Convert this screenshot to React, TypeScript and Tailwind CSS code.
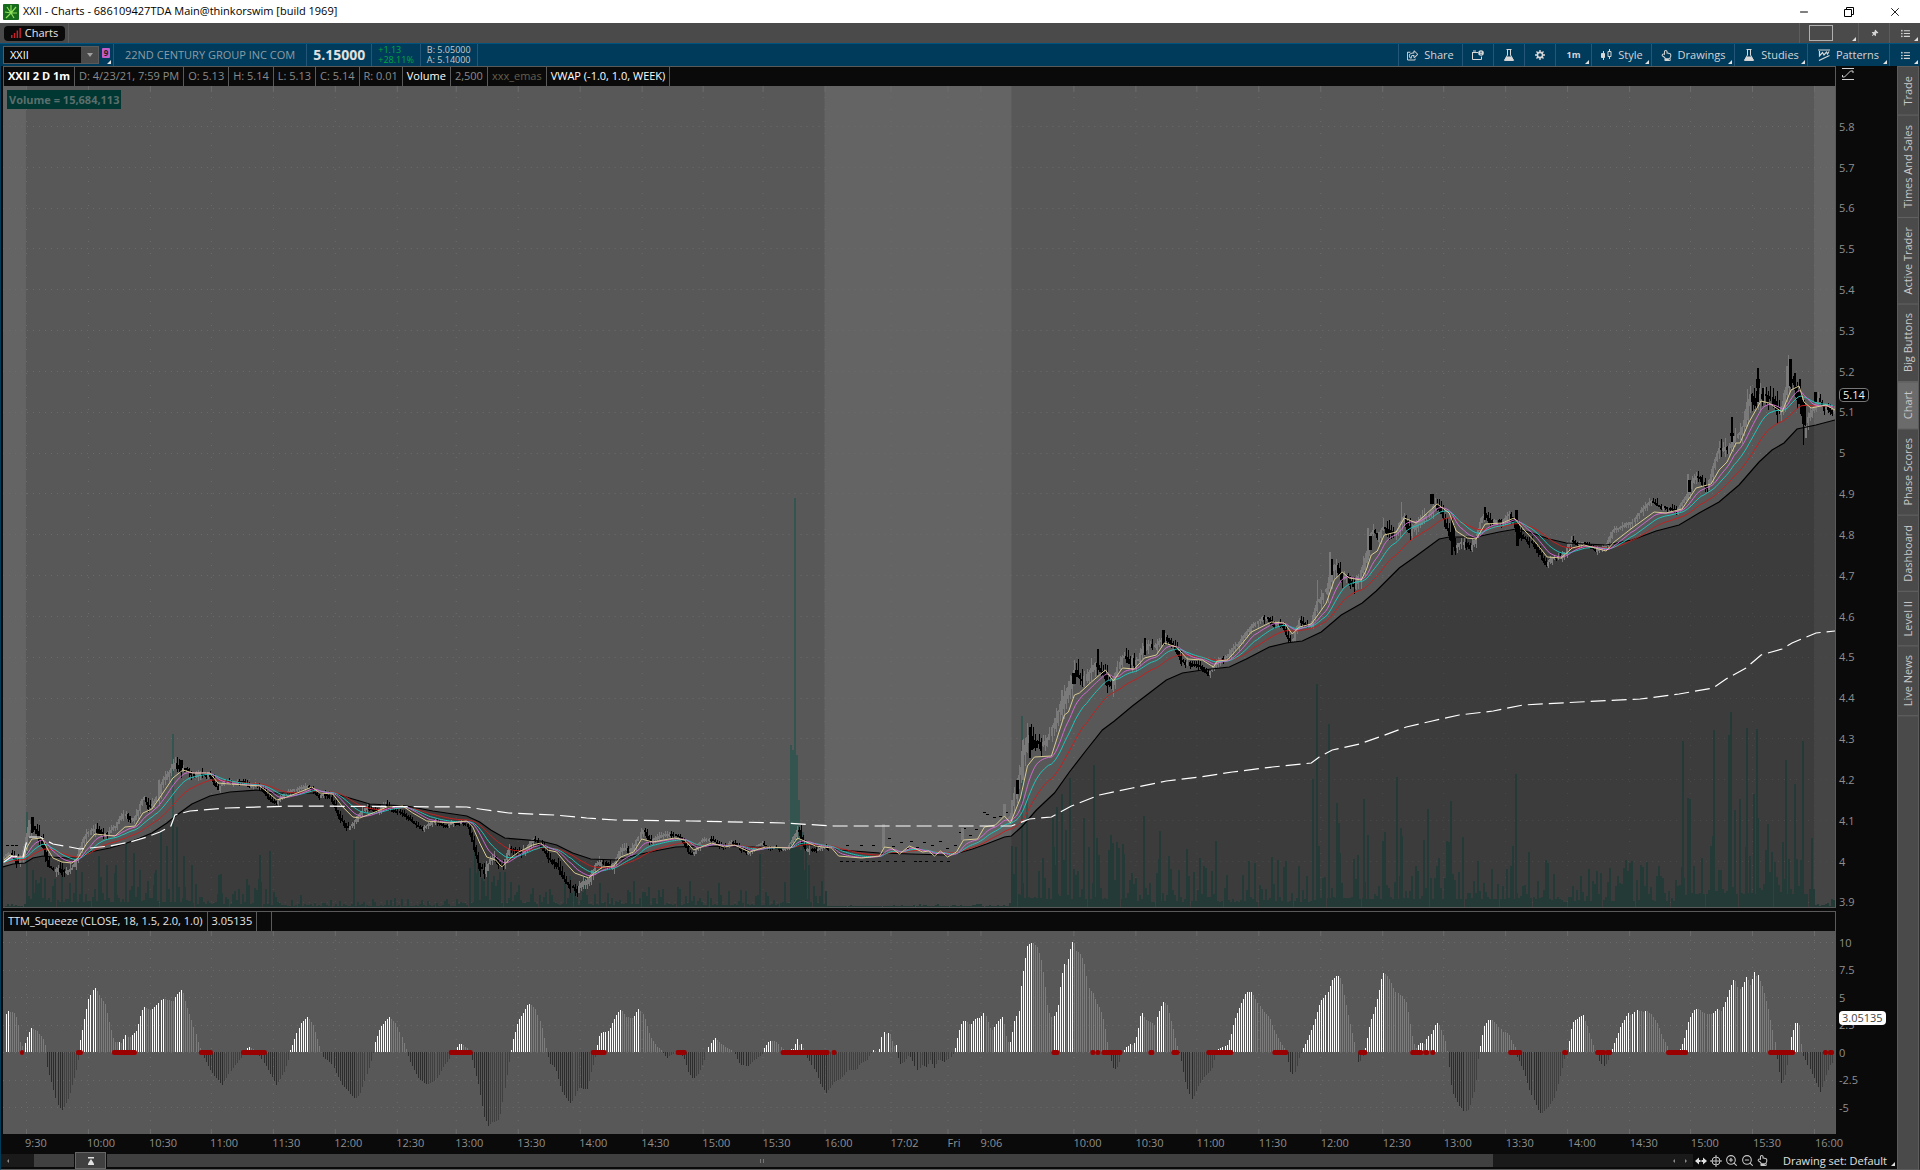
import type { ReactNode } from "react";
import { FaListUl, FaRegHandPointUp, FaRegShareSquare, FaThumbtack } from "react-icons/fa";
import { Minus, X, ZoomIn, ZoomOut } from "lucide-react";

type Pt = [number, number];

const STEP = 2.06;
const LEFT = 3;
const RIGHT = 1836;

const FAST: Pt[] = [
  [4,860],[10,855],[15,857],[24,857],[27,847],[32,839],[42,838],[47,848],[53,858],[62,862],[72,863],[78,858],[87,843],[95,834],
  [115,836],[125,827],[135,826],[143,813],[152,809],[163,793],[173,778],[183,770],[193,773],[210,773],[218,783],[230,784],
  [260,786],[270,794],[277,800],[287,797],[300,792],[312,787],[320,793],[333,794],[343,807],[353,817],[360,818],[373,813],
  [387,807],[403,806],[413,813],[427,821],[450,823],[467,821],[473,827],[480,843],[487,857],[496,860],[502,867],[512,857],
  [519,852],[533,845],[541,843],[548,850],[557,852],[566,863],[575,873],[589,878],[596,872],[603,867],[614,866],[621,857],
  [634,852],[642,839],[653,842],[675,838],[685,840],[694,850],[712,843],[725,847],[735,845],[750,852],[766,847],[791,848],
  [798,838],[807,842],[816,846],[832,848],[839,856],[862,858],[880,856],[885,847],[892,848],[900,854],[910,846],[923,852],
  [929,851],[935,856],[941,851],[948,857],[957,852],[964,840],[978,839],[985,827],[996,825],[1005,816],[1011,823],
  [1021,798],[1028,766],[1035,757],[1052,756],[1058,737],[1065,715],[1069,712],[1075,695],[1080,693],[1092,682],[1106,670],
  [1114,681],[1123,668],[1135,669],[1145,658],[1157,655],[1165,643],[1177,647],[1188,659],[1203,660],[1214,667],[1218,661],
  [1228,660],[1240,647],[1252,632],[1272,622],[1285,623],[1293,634],[1300,627],[1312,624],[1320,613],[1327,603],[1335,580],
  [1343,572],[1350,578],[1362,580],[1367,570],[1372,555],[1378,551],[1385,535],[1397,532],[1405,518],[1417,523],[1438,504],
  [1450,513],[1457,531],[1468,538],[1477,539],[1486,524],[1503,523],[1515,518],[1525,530],[1537,543],[1548,557],[1562,558],
  [1573,548],[1585,545],[1607,551],[1615,542],[1633,528],[1655,512],[1667,513],[1683,509],[1697,488],[1712,484],[1720,470],
  [1728,462],[1737,443],[1741,443],[1750,422],[1762,401],[1770,403],[1783,412],[1792,390],[1800,386],[1805,402],[1812,408],
  [1827,405],[1836,410],
];

const SLOW: Pt[] = [
  [3,867],[13,864],[25,863],[33,858],[43,856],[53,857],[67,858],[80,858],[90,852],[110,848],[127,843],[140,838],[152,833],
  [167,823],[177,815],[192,804],[210,796],[230,792],[257,790],[273,793],[300,793],[333,793],[353,799],[370,804],[407,806],
  [433,811],[467,816],[480,822],[491,830],[505,838],[541,841],[557,845],[573,853],[591,859],[617,860],[637,855],[655,851],
  [676,847],[701,846],[751,847],[791,848],[801,844],[823,846],[841,850],[880,853],[944,855],[959,853],[973,849],[987,844],
  [1005,837],[1012,836],[1023,826],[1037,810],[1055,793],[1070,772],[1087,750],[1103,730],[1115,721],[1133,706],[1150,693],
  [1167,680],[1183,673],[1203,670],[1230,667],[1247,659],[1270,647],[1287,643],[1303,641],[1322,632],[1342,615],[1363,603],
  [1377,591],[1400,568],[1417,556],[1440,539],[1450,537],[1477,537],[1500,532],[1517,529],[1533,533],[1550,539],[1567,543],
  [1607,545],[1633,540],[1657,531],[1680,525],[1700,513],[1720,502],[1740,485],[1760,462],[1773,450],[1785,443],[1798,429],
  [1817,425],[1836,420],
];

const VWAP: Pt[] = [
  [4,862],[12,856],[23,857],[27,840],[30,837],[40,837],[53,844],[70,847],[80,849],[110,846],[130,842],[147,837],[160,832],
  [171,826],[175,815],[190,811],[227,808],[293,806],[467,807],[480,809],[509,813],[555,815],[587,818],[616,820],[691,821],
  [784,823],[834,826],[1012,826],[1030,819],[1052,817],[1072,806],[1100,795],[1133,788],[1167,781],[1200,777],[1233,772],
  [1273,767],[1312,763],[1320,757],[1333,750],[1360,744],[1383,736],[1407,727],[1433,721],[1460,715],[1494,711],[1524,705],
  [1580,702],[1641,699],[1680,694],[1714,688],[1727,679],[1747,668],[1762,655],[1783,649],[1793,643],[1817,633],[1836,631],
];

// candle size along the session
const RANGE: Pt[] = [
  [4,1],[26,12],[60,9],[85,9],[115,7],[175,10],[220,5],[300,4],[340,6],[470,4],[480,12],[510,7],[570,9],[640,8],[660,5],
  [790,3],[800,10],[820,3],[1010,2],[1020,24],[1050,14],[1065,18],[1110,13],[1200,7],[1310,6],[1325,14],[1400,13],[1450,10],
  [1520,8],[1600,5],[1700,8],[1730,15],[1800,17],[1815,9],[1836,7],
];

// x, top, bottom, width of the widest swings
const SWINGS_DOWN: [number, number, number, number][] = [
  [31,817,833,2],[180,760,768,3],[1030,727,758,2],[1031,736,750,3],[1017,780,794,3],[1073,673,684,4],[1098,649,668,2],[1145,638,655,2],
  [1163,630,645,3],[1332,559,575,2],[1370,536,550,3],[1431,494,504,4],[1452,518,555,2],[1453,525,545,3],[1485,507,520,2],
  [1516,510,520,3],[1517,520,546,3],[1689,480,492,3],[1732,417,442,2],[1731,433,436,4],[1758,368,402,2],[1757,379,388,4],[1763,388,402,2],
  [1790,359,386,3],[1795,373,388,2],[1800,379,400,2],[1803,400,424,3],[1804,420,445,1],[1815,392,402,3],
];
const SWINGS_UP: [number, number, number, number][] = [
  [28,820,836,2],[158,780,792,2],[1012,800,822,2],[1023,740,780,2],[1028,723,745,1],[1062,690,715,2],[1318,580,612,1],[1330,552,588,2],
  [1368,528,560,2],[1402,502,518,1],[1688,474,500,2],[1748,389,420,1],[1787,366,395,2],[1789,355,380,1],[1806,425,438,2],
];

const VOLUME_RANGE: Pt[] = [
  [3,3],[26,3],[27,40],[190,36],[200,22],[260,26],[276,14],[320,8],[465,8],[472,40],[560,20],[640,20],[780,14],[800,60],
  [825,22],[827,2],[1010,3],[1013,70],[1130,70],[1140,45],[1310,45],[1320,75],[1400,65],[1520,65],[1560,45],[1680,50],
  [1690,110],[1812,110],[1816,10],[1836,8],
];

const VOLUME_SPIKES: Pt[] = [
  [27,812],[33,870],[36,880],[41,877],[70,883],[76,870],[99,856],[116,865],[126,843],[134,853],[140,870],[155,873],[161,832],
  [167,846],[173,734],[177,827],[184,856],[192,865],[219,875],[221,874],[260,855],[270,851],[354,840],[470,868],[475,850],
  [478,860],[488,865],[498,880],[565,883],[570,876],[585,875],[600,883],[634,881],[659,890],[678,887],[690,881],[719,883],
  [741,890],[760,854],[791,745],[793,750],[795,498],[797,755],[799,800],[801,850],[803,832],[806,840],[809,865],[822,882],
  [1013,857],[1017,847],[1023,716],[1028,797],[1044,858],[1054,818],[1058,807],[1063,794],[1067,830],[1071,778],[1085,818],
  [1095,765],[1098,838],[1110,850],[1120,848],[1124,844],[1145,816],[1161,831],[1170,856],[1188,849],[1217,841],[1273,857],
  [1314,779],[1318,684],[1320,846],[1330,724],[1338,803],[1340,823],[1365,799],[1369,835],[1398,777],[1402,828],[1429,809],
  [1452,801],[1450,842],[1517,774],[1684,741],[1715,730],[1730,735],[1732,712],[1748,728],[1758,729],[1787,760],[1804,741],
];

const SQUEEZE: Pt[] = [
  [6,38],[8,41],[15,39],[18,30],[21,5],[24,8],[30,24],[37,21],[44,12],[46,3],[47,-14],[57,-52],[62,-59],[69,-44],[71,-37],
  [77,-14],[79,-4],[80,11],[88,52],[94,65],[100,55],[105,48],[109,30],[113,14],[116,9],[118,10],[122,9],[125,17],[129,14],
  [136,21],[141,40],[143,45],[151,42],[157,48],[162,53],[173,51],[176,57],[182,63],[186,48],[192,30],[198,9],[201,0],[203,-5],
  [211,-20],[222,-33],[233,-15],[241,-6],[244,0],[248,5],[253,3],[256,0],[261,-6],[276,-33],[284,-20],[289,-6],[290,1],
  [294,12],[300,28],[307,35],[313,27],[320,3],[323,-5],[331,-11],[341,-32],[355,-47],[360,-42],[367,-21],[372,-5],[374,8],
  [380,25],[389,35],[396,28],[402,14],[406,2],[409,-8],[418,-26],[427,-33],[435,-29],[443,-15],[450,-5],[453,0],[456,3],
  [460,9],[469,3],[471,-6],[478,-33],[484,-65],[488,-74],[492,-70],[498,-69],[501,-60],[506,-26],[510,-2],[512,10],[518,32],
  [522,37],[528,49],[535,44],[541,27],[546,3],[549,-11],[555,-16],[562,-40],[571,-52],[578,-36],[587,-37],[591,-20],[595,-6],
  [596,2],[600,19],[608,21],[616,38],[621,43],[626,35],[633,34],[639,44],[644,35],[650,15],[656,6],[661,2],[667,-6],[673,-2],
  [676,1],[683,-5],[688,-20],[693,-27],[699,-21],[705,-6],[707,2],[714,15],[720,9],[726,4],[731,2],[735,-2],[740,-12],
  [747,-15],[754,-8],[762,-2],[763,2],[767,9],[771,12],[778,9],[781,4],[785,2],[793,3],[797,13],[799,7],[802,8],[804,2],
  [808,-7],[816,-21],[820,-33],[826,-41],[834,-30],[841,-27],[848,-18],[856,-18],[860,-11],[867,-8],[871,-1],[873,2],[877,0],
  [879,2],[881,8],[882,23],[885,17],[887,19],[890,18],[893,6],[896,7],[897,-3],[900,-12],[905,-9],[909,-3],[913,-10],
  [918,-22],[922,-13],[927,-15],[931,-8],[935,-16],[940,-7],[945,-10],[952,-5],[955,1],[959,20],[963,31],[967,31],[971,27],
  [977,34],[981,34],[985,40],[990,26],[992,21],[995,25],[1000,33],[1004,35],[1007,17],[1010,7],[1012,12],[1015,30],[1020,42],
  [1022,73],[1025,88],[1027,106],[1029,107],[1033,110],[1038,105],[1043,90],[1046,67],[1049,42],[1053,34],[1058,42],[1061,67],
  [1064,88],[1068,87],[1070,100],[1074,113],[1078,98],[1080,101],[1085,90],[1090,62],[1094,59],[1097,49],[1101,43],[1105,29],
  [1109,5],[1111,-5],[1115,-19],[1120,-13],[1122,-1],[1127,5],[1131,8],[1134,7],[1138,18],[1142,41],[1146,33],[1156,27],
  [1158,37],[1164,51],[1168,47],[1173,27],[1178,6],[1181,-3],[1187,-33],[1193,-48],[1199,-33],[1205,-25],[1213,-17],[1217,-1],
  [1220,4],[1227,6],[1231,15],[1235,32],[1240,44],[1247,60],[1253,60],[1258,50],[1264,41],[1270,35],[1275,22],[1280,12],
  [1286,3],[1288,-3],[1292,-23],[1296,-20],[1300,-5],[1304,4],[1308,12],[1315,29],[1321,50],[1328,59],[1333,73],[1338,77],
  [1342,73],[1347,47],[1353,20],[1357,2],[1360,-13],[1364,-3],[1367,11],[1371,31],[1375,41],[1380,62],[1383,78],[1385,80],
  [1391,72],[1396,60],[1403,56],[1407,50],[1410,34],[1414,10],[1417,4],[1422,10],[1426,8],[1428,15],[1432,18],[1436,28],
  [1439,29],[1444,17],[1447,8],[1449,-6],[1453,-40],[1460,-53],[1465,-60],[1469,-58],[1476,-36],[1479,-6],[1482,12],[1485,26],
  [1489,32],[1493,32],[1498,27],[1504,20],[1509,19],[1513,9],[1516,5],[1518,-5],[1525,-20],[1531,-40],[1540,-61],[1543,-61],
  [1549,-55],[1555,-46],[1560,-30],[1564,-13],[1567,0],[1569,7],[1571,21],[1574,31],[1584,37],[1589,23],[1593,10],[1597,0],
  [1601,-10],[1605,-15],[1610,-5],[1613,4],[1617,14],[1621,25],[1629,39],[1632,37],[1638,42],[1643,40],[1647,41],[1652,38],
  [1658,29],[1664,14],[1668,7],[1671,-1],[1679,-1],[1682,5],[1685,14],[1689,30],[1694,41],[1698,44],[1704,40],[1711,37],
  [1718,43],[1722,41],[1727,52],[1731,64],[1735,74],[1739,64],[1742,63],[1747,76],[1751,67],[1755,80],[1757,76],[1759,77],
  [1764,64],[1769,45],[1775,14],[1778,-10],[1782,-33],[1787,-20],[1789,-5],[1792,15],[1796,29],[1800,29],[1802,10],[1804,-3],
  [1811,-18],[1821,-40],[1827,-23],[1832,-11],
];

const DOTS: Pt[] = [
  [20,24],[76,83],[112,137],[199,213],[241,267],[449,473],[591,607],[676,687],[781,830],[832,837],[1052,1060],[1091,1096],
  [1096,1101],[1102,1123],[1149,1155],[1172,1180],[1207,1234],[1273,1289],[1359,1368],[1411,1424],[1424,1430],[1431,1436],
  [1509,1523],[1563,1569],[1596,1607],[1606,1613],[1667,1689],[1769,1796],[1824,1829],[1829,1835],
];

const TIMES: [string, number][] = [
  ["9:30",26],["10:00",88],["10:30",150],["11:00",211],["11:30",273],["12:00",335],["12:30",397],["13:00",456],["13:30",518],
  ["14:00",580],["14:30",642],["15:00",703],["15:30",763],["16:00",825],["17:02",891],["Fri",948],["9:06",981],["10:00",1074],
  ["10:30",1136],["11:00",1197],["11:30",1259],["12:00",1321],["12:30",1383],["13:00",1444],["13:30",1506],["14:00",1568],
  ["14:30",1630],["15:00",1691],["15:30",1753],["16:00",1815],
];

const PRICES = ["5.8","5.7","5.6","5.5","5.4","5.3","5.2","5.1","5","4.9","4.8","4.7","4.6","4.5","4.4","4.3","4.2","4.1","4","3.9"];
const LEVELS = ["10", "7.5", "5", "2.5", "0", "-2.5", "-5"];

// thin prints outside regular hours
const PRINTS: Pt[] = [
  [6,845],[11,845],[15,845],[840,861],[846,861],[852,861],[860,861],[866,861],[872,861],[878,861],[886,861],[894,861],[902,861],
  [914,861],[920,861],[926,861],[934,861],[941,861],[948,861],[846,845],[860,845],[872,845],[888,838],[892,846],[900,842],
  [906,848],[910,841],[916,847],[924,842],[932,845],[940,841],[947,848],[955,845],[960,832],[964,828],[970,835],[976,829],
  [984,812],[987,814],[994,817],[1000,816],[1004,815],[1006,812],
];

function at(points: Pt[], x: number) {
  if (x <= points[0][0]) return points[0][1];
  for (let i = 1; i < points.length; i++) {
    const [x1, y1] = points[i];
    if (x <= x1) {
      const [x0, y0] = points[i - 1];
      return y0 + ((y1 - y0) * (x - x0)) / (x1 - x0);
    }
  }
  return points[points.length - 1][1];
}

function random(seed: number) {
  let s = seed;
  return () => {
    s = (s * 1664525 + 1013904223) % 4294967296;
    return s / 4294967296;
  };
}

const line = (points: Pt[]) => "M" + points.map(([x, y]) => `${x} ${y.toFixed(1)}`).join("L");

function ema(length: number): Pt[] {
  const out: Pt[] = [];
  const k = 2 / (length + 1);
  let v = 863;
  for (let x = 3; x <= RIGHT; x += STEP) {
    v += (at(FAST, x) - v) * k;
    out.push([Math.round(x), v]);
  }
  return out;
}

function candles() {
  const rnd = random(22);
  let up = "";
  let down = "";
  let prev = at(FAST, 4);
  let drift = 0;
  let push = 0;
  let i = 0;
  for (let x = 4; x < RIGHT; x += STEP) {
    const size = at(RANGE, x);
    if (x > 830 && x < 1008) {
      prev = at(FAST, x);
      continue;
    }
    // moves last three bars, so that rising and falling bars come in runs
    if (i++ % 3 === 0) push = rnd() - 0.5;
    drift = drift * 0.8 + push * size * 0.6;
    const fast = at(FAST, x);
    const lead = (at(FAST, x + 5) - at(FAST, x - 7)) * 0.75;
    const close = fast + lead + drift;
    const top = Math.round(Math.min(prev, close));
    const h = Math.max(2, Math.round(Math.abs(close - prev) + rnd() * size * 0.5));
    const wickTop = Math.round(top - rnd() * size * 0.7);
    const wickEnd = Math.round(top + h + rnd() * size * 0.6);
    const px = Math.round(x);
    const d = `M${px - 1} ${top}h2v${h}h-2zM${px} ${wickTop}h1V${wickEnd}h-1z`;
    if (close < prev) up += d;
    else down += d;
    prev = close;
  }
  for (const [x, y0, y1, w] of SWINGS_UP) up += `M${x} ${y0}h${w}V${y1}h${-w}z`;
  for (const [x, y0, y1, w] of SWINGS_DOWN) down += `M${x} ${y0}h${w}V${y1}h${-w}z`;
  return { up, down };
}

function volume() {
  const rnd = random(7);
  let d = "";
  for (let x = 5; x < RIGHT; x += STEP) {
    const r = rnd();
    const h = Math.max(1, Math.round(at(VOLUME_RANGE, x) * (0.12 + r * r * r)));
    d += `M${Math.round(x)} 907v${-h}h2v${h}z`;
  }
  for (const [x, y] of VOLUME_SPIKES) d += `M${x - 1} 907V${y}h2V907z`;
  return d;
}

function squeeze() {
  const out = { rise: "", fade: "", drop: "", recover: "" };
  let prev = 0;
  for (let x = 6; x < 1834; x += STEP) {
    const v = at(SQUEEZE, x);
    const bar = `M${Math.round(x)} 1052v${-Math.round(v)}h1V1052z`;
    if (v >= 0) out[v >= prev ? "rise" : "fade"] += bar;
    else out[v < prev ? "drop" : "recover"] += bar;
    prev = v;
  }
  return out;
}

const CANDLES = candles();
const VOLUME = volume();
const BARS = squeeze();

function Corner() {
  return (
    <svg className="absolute right-0.5 bottom-0.5 size-1" viewBox="0 0 4 4" fill="#e0e0e0"><path d="M4 0v4H0z" /></svg>
  );
}

function Flask() {
  return (
    <svg className="size-3" viewBox="0 0 12 12" fill="none" stroke="#d8d8d8">
      <path d="M3.5 .5h5M4.5 1v5L1.5 11.3h9L7.5 6V1" />
      <path d="M3.6 8h4.8l1.8 3.3H1.8z" fill="#d8d8d8" />
    </svg>
  );
}

function Gear() {
  return (
    <svg className="size-2.5" viewBox="0 0 10 10" fill="none" stroke="#d8d8d8">
      <circle cx="5" cy="5" r="2.6" strokeWidth="1.6" />
      <path d="M5 0v2M5 8v2M0 5h2M8 5h2M1.500 1.500l1.400 1.400M7.100 7.100l1.400 1.400M8.500 1.500 7.100 2.900M2.900 7.100 1.500 8.500" strokeWidth="1.400" />
    </svg>
  );
}

function StyleIcon() {
  return (
    <svg className="size-3" viewBox="0 0 12 12" fill="none" stroke="#d8d8d8">
      <path d="M3.5 2v9M9.5 0v10" />
      <path d="M1.5 4.5h3v4h-3z" fill="#d8d8d8" />
      <path d="M8 2.5h3v5H8z" fill="#003b5c" />
    </svg>
  );
}

function PatternIcon() {
  return (
    <svg className="size-3" viewBox="0 0 12 12" fill="none" stroke="#d8d8d8">
      <path d="M0 1h12M1.500 2v5l3-3.500 1.500 2.500 2.500-3 1 2L11 2.500M1 11.500 11.500 6.500" strokeWidth="1.200" />
    </svg>
  );
}

function AlertIcon() {
  return (
    <svg className="size-3" viewBox="0 0 12 12" fill="none" stroke="#d8d8d8">
      <path d="M.5 3v7.500h9V7.500M.5 3.500H6M1 2h3" />
      <circle cx="9" cy="4" r="2.800" fill="#d8d8d8" stroke="none" />
      <path d="M9 2.500v1.800M9 5v.8" stroke="#003b5c" />
    </svg>
  );
}

function Tool({ label, icon, width, menu, text }: { label: string; icon?: ReactNode; width: string; menu?: boolean; text?: boolean }) {
  return (
    <button aria-label={label} className={`relative flex h-full items-center justify-center gap-1.5 border-l border-[#24567a] text-[#d4d4d4] ${width}`}>
      {icon}
      {text && <span>{label}</span>}
      {menu && <Corner />}
    </button>
  );
}

function TitleBar() {
  return (
    <header className="flex h-[23px] shrink-0 items-center bg-white pl-[3px] text-black">
      <svg className="size-4" viewBox="0 0 16 16">
        <rect width="16" height="16" rx="1" fill="#176b1c" />
        <path d="M8 9 4 3M8 9l5-6M8 9V1M8 9l6 0M8 9 2 8M8 9l-5 5M8 9l3 5" stroke="#8fe05a" strokeWidth="1.200" />
      </svg>
      <h1 className="ml-1 text-[11px]">XXII - Charts - 686109427TDA Main@thinkorswim [build 1969]</h1>
      <div className="ml-auto flex items-center gap-[34px] pr-[18px]">
        <button aria-label="Minimize"><Minus size={12} strokeWidth={2} /></button>
        <button aria-label="Restore">
          <svg className="size-2.5" viewBox="0 0 10 10" fill="none" stroke="#000"><path d="M.5 2.500h7v7h-7zM2.500 2.500v-2h7v7h-2" /></svg>
        </button>
        <button aria-label="Close"><X size={14} strokeWidth={1.500} /></button>
      </div>
    </header>
  );
}

function TabBar() {
  return (
    <nav className="flex h-5 shrink-0 items-stretch bg-[#4a4a4a]">
      <div className="flex items-center border-r border-[#5c5c5c] pr-[3px] pl-1">
        <button className="flex h-[15px] w-[61px] items-center justify-center gap-1 rounded bg-[#0a0a0a] text-[11px] text-[#e6e6e6]">
          <svg className="size-2.5" viewBox="0 0 10 10" fill="#c4232a"><path d="M0 7h1.500v3H0zM2.800 5h1.500v5H2.800zM5.600 2.500h1.500V10H5.600zM8.400 0h1.500v10H8.400z" /></svg>
          Charts
        </button>
      </div>
      <button aria-label="Workspace" className="relative ml-auto w-[59px] border-l border-[#5c5c5c] pl-[9px]">
        <span className="block h-4 w-6 border border-[#b0b0b0]" />
        <Corner />
      </button>
      <button aria-label="Pin" className="flex w-[31px] items-center justify-center border-l border-[#5c5c5c] text-[#d4d4d4]"><FaThumbtack size={7} className="rotate-45" /></button>
      <button aria-label="Tab menu" className="relative flex w-[31px] items-center justify-center border-l border-[#5c5c5c] text-[#d4d4d4]"><FaListUl size={9} /><Corner /></button>
    </nav>
  );
}

function Toolbar() {
  return (
    <div className="flex h-[23px] shrink-0 items-center border-t border-[#00527f] bg-[#003b5c] text-[11px]">
      <div className="ml-[3px] flex h-[18px] w-24 items-center border border-[#5a5a5a] bg-[#0a0a0a]">
        <input aria-label="Symbol" defaultValue="XXII" className="w-0 flex-1 bg-transparent pl-1.5 text-white outline-none" />
        <button aria-label="Recent symbols" className="flex h-4 w-[17px] items-center justify-center bg-[#4a4a4a]">
          <svg className="h-1 w-1.5" viewBox="0 0 6 4" fill="#a0a0a0"><path d="M0 0h6L3 4z" /></svg>
        </button>
      </div>
      <button aria-label="Link color" className="relative flex h-full w-[15px] items-start justify-center border-r border-[#24567a] pt-1">
        <span className="flex h-2.5 w-2 items-center justify-center rounded-[1px] bg-[#c45cc8] text-[8px] font-bold text-[#222]">9</span>
        <Corner />
      </button>
      <span className="px-[11px] text-[#8f9ba2]">22ND CENTURY GROUP INC COM</span>
      <strong className="flex h-full items-center border-x border-[#24567a] px-1.5 text-sm text-[#e0e0e0]">5.15000</strong>
      <div className="flex h-full flex-col justify-center border-r border-[#24567a] px-1.5 text-[9px] leading-[10px] text-[#00a83c]">
        <span>+1.13</span>
        <span>+28.11%</span>
      </div>
      <div className="flex h-full flex-col justify-center border-r border-[#24567a] px-1.5 text-[9px] leading-[10px] text-[#c8c8c8]">
        <span>B: 5.05000</span>
        <span>A: 5.14000</span>
      </div>
      <div className="ml-auto flex h-full">
        <Tool label="Share" text width="w-16" icon={<FaRegShareSquare size={11} />} />
        <Tool label="Alerts" width="w-[31px]" icon={<AlertIcon />} />
        <Tool label="Quick study" width="w-[31px]" icon={<Flask />} />
        <Tool label="Settings" width="w-[31px]" icon={<Gear />} />
        <Tool label="Time frame" width="w-9" menu icon={<span className="text-[9px] font-bold">1m</span>} />
        <Tool label="Style" text width="w-[60px]" menu icon={<StyleIcon />} />
        <Tool label="Drawings" text width="w-[83px]" menu icon={<FaRegHandPointUp size={11} />} />
        <Tool label="Studies" text width="w-[73px]" menu icon={<Flask />} />
        <Tool label="Patterns" text width="w-[82px]" menu icon={<PatternIcon />} />
        <Tool label="Chart menu" width="w-[31px]" menu icon={<FaListUl size={9} />} />
      </div>
    </div>
  );
}

function Cell({ children, className = "text-[#8a8a8a]" }: { children?: ReactNode; className?: string }) {
  return <span className={`flex items-center border-r border-[#5a5a5a] px-1 whitespace-nowrap ${className}`}>{children}</span>;
}

function PriceChart() {
  const fill = "M3 907L" + line(SLOW).slice(1) + "V907z";
  return (
    <svg role="img" aria-label="XXII price chart" viewBox="3 86 1833 821" preserveAspectRatio="none" className="absolute inset-0 size-full">
      <rect x={LEFT} y="86" width="1833" height="821" fill="#585858" />
      <path d="M3 86h23v821H3zM825 86h187v821H825zM1815 86h21v821h-21z" fill="#646464" />
      <g stroke="#6c6c6c" fill="none" shapeRendering="crispEdges">
        <path strokeDasharray="1 5" d={PRICES.map((_, i) => `M3 ${Math.round(126 + i * 40.83)}.5H1836`).join("")} />
        <path strokeDasharray="1 11" d={TIMES.map(([, x]) => `M${x}.5 97V907`).join("")} />
        <path d={TIMES.map(([, x]) => `M${x}.5 86v6`).join("")} />
      </g>
      <path d={VOLUME} fill="#33544f" shapeRendering="crispEdges" />
      <path d={fill} fill="#000" fillOpacity=".31" />
      <g shapeRendering="crispEdges">
        <path d={CANDLES.up} fill="#7a7a7a" />
        <path d={CANDLES.down} fill="#000" />
        <path d={PRINTS.map(([x, y]) => `M${x} ${y}h3v1h-3z`).join("")} fill="#000" />
        <path d="M882 824h3v24h-3zM962 828h3v12h-3zM1004 804h3v12h-3z" fill="#7a7a7a" />
      </g>
      <g fill="none" strokeWidth="1">
        <path d={line(SLOW)} stroke="#000" strokeWidth="1.2" />
        <path d={line(ema(25))} stroke="#c3201f" />
        <path d={line(ema(13))} stroke="#20c4bd" />
        <path d={line(ema(6))} stroke="#cf6ad0" />
        <path d={line(FAST)} stroke="#d8ca92" />
        <path d={line(VWAP)} stroke="#fff" strokeWidth="1.2" strokeDasharray="15 6" />
      </g>
    </svg>
  );
}

function SqueezeChart() {
  return (
    <svg role="img" aria-label="TTM Squeeze histogram" viewBox="3 931 1833 203" preserveAspectRatio="none" className="absolute inset-0 size-full">
      <rect x={LEFT} y="931" width="1833" height="203" fill="#585858" />
      <g stroke="#6c6c6c" fill="none" shapeRendering="crispEdges">
        <path strokeDasharray="1 5" d={LEVELS.map((_, i) => `M3 ${Math.round(942 + i * 27.5)}.5H1836`).join("")} />
        <path strokeDasharray="1 8" d={TIMES.map(([, x]) => `M${x}.5 940V1134`).join("")} />
        <path d={TIMES.map(([, x]) => `M${x}.5 931v5m0 194v4`).join("")} />
      </g>
      <g shapeRendering="crispEdges">
        <path d={BARS.rise} fill="#fff" />
        <path d={BARS.fade} fill="#7c7c7c" />
        <path d={BARS.drop} fill="#2c2c2c" />
        <path d={BARS.recover} fill="#404040" />
      </g>
      <g fill="#9b0000">
        {DOTS.map(([a, b]) => <rect key={a} x={a} y="1050" width={b - a} height="5" rx="2" />)}
      </g>
    </svg>
  );
}

function TimeAxis() {
  return (
    <div className="flex h-[18px] shrink-0 items-center pl-[22px] text-[11px] text-[#8f8f8f]">
      {TIMES.map(([label, x], i) => (
        <span key={x} className="w-0 whitespace-nowrap" style={{ flexGrow: (TIMES[i + 1]?.[1] ?? RIGHT) - x }}>{label}</span>
      ))}
    </div>
  );
}

function ScrollRow() {
  return (
    <div className="flex h-[17px] shrink-0 items-center">
      <button aria-label="Scroll left" className="flex h-[13px] w-[33px] items-center bg-[#1a1a1a] pl-1.5">
        <svg className="h-1 w-0.5" viewBox="0 0 2 4" fill="#8a8a8a"><path d="M2 0v4L0 2z" /></svg>
      </button>
      <div className="h-[13px] w-10 bg-[#404040]" />
      <button aria-label="Expand" className="mx-px flex h-[17px] w-[31px] items-center justify-center border border-[#666] bg-[#404040]">
        <svg className="h-2 w-1.5" viewBox="0 0 6 8" fill="#e0e0e0"><path d="M0 0h6v1.500H0zM3 2l2 3H1zM0 7h6v1H0zM1 5h4l1 2H0z" /></svg>
      </button>
      <div className="flex h-[13px] flex-1 items-center justify-center bg-[#404040] pr-[76px]">
        <span className="h-1 w-1 border-x border-[#777]" />
      </div>
      <div className="flex h-[13px] w-[200px] items-center justify-end gap-2.5 bg-[#1a1a1a] pr-1.5">
        <svg className="h-1 w-0.5" viewBox="0 0 2 4" fill="#8a8a8a"><path d="M2 0v4L0 2z" /></svg>
        <svg className="h-1 w-0.5" viewBox="0 0 2 4" fill="#8a8a8a"><path d="M0 0v4l2-2z" /></svg>
      </div>
      <div className="flex h-[15px] w-[204px] items-center gap-[3px] pl-0.5 text-[#c8c8c8]">
        <button aria-label="Pan"><svg className="h-2 w-3" viewBox="0 0 12 8" fill="#e0e0e0"><path d="M0 4l4-3.500v7zM12 4 8 .5v7zM4 3h1.500v2H4zM6.500 3H8v2H6.500z" /></svg></button>
        <button aria-label="Crosshair"><svg className="size-3" viewBox="0 0 12 12" fill="none" stroke="#c8c8c8"><circle cx="6" cy="6" r="4" /><path d="M6 0v12M0 6h12" /></svg></button>
        <button aria-label="Zoom in"><ZoomIn size={13} strokeWidth={2} /></button>
        <button aria-label="Zoom out"><ZoomOut size={13} strokeWidth={2} /></button>
        <button aria-label="Pointer"><FaRegHandPointUp size={11} /></button>
        <button className="relative ml-auto h-full pr-2.5 text-[11px] leading-[15px] whitespace-nowrap text-[#e0e0e0]">Drawing set: Default<Corner /></button>
      </div>
    </div>
  );
}

const PANELS = ["Trade", "Times And Sales", "Active Trader", "Big Buttons", "Chart", "Phase Scores", "Dashboard", "Level II", "Live News"];

function SideTabs() {
  return (
    <aside className="flex w-[22px] shrink-0 flex-col border-x border-t border-[#5c5c5c] bg-[#4a4a4a]">
      {PANELS.map((name) => (
        <button
          key={name}
          className={`flex w-full rotate-180 items-center justify-center border-t border-[#636363] pt-[9px] pb-[9px] text-[11px] leading-5 whitespace-nowrap text-[#c8c8c8] [writing-mode:vertical-rl] ${name === "Chart" ? "bg-[#6b6b6b]" : ""}`}
        >
          {name}
        </button>
      ))}
    </aside>
  );
}

export default function App() {
  return (
    <div className="flex h-screen min-h-[600px] flex-col overflow-hidden bg-[#0a0a0a] font-['Open_Sans',sans-serif] text-xs">
      <TitleBar />
      <TabBar />
      <Toolbar />
      <div className="flex min-h-0 flex-1 border-r border-b border-l border-r-[#003b5c] border-b-[#5a5a5a] border-l-[#003b5c]">
        <main className="flex min-w-0 flex-1 flex-col">
          <section className="flex min-h-0 flex-1">
            <div className="ml-0.5 flex min-w-0 flex-1 flex-col border border-l-0 border-[#5a5a5a]">
              <div className="flex h-[19px] shrink-0 border-l border-[#5a5a5a] text-[11px]">
                <Cell className="font-bold text-white">XXII 2 D 1m</Cell>
                <Cell>D: 4/23/21, 7:59 PM</Cell>
                <Cell>O: 5.13</Cell>
                <Cell>H: 5.14</Cell>
                <Cell>L: 5.13</Cell>
                <Cell>C: 5.14</Cell>
                <Cell>R: 0.01</Cell>
                <Cell className="text-white">Volume</Cell>
                <Cell>2,500</Cell>
                <Cell className="text-[#66604a]">xxx_emas</Cell>
                <Cell className="text-white">VWAP (-1.0, 1.0, WEEK)</Cell>
              </div>
              <div className="relative flex-1">
                <PriceChart />
                <span className="absolute top-1 left-1 bg-[#003733] px-0.5 text-[11px] leading-[19px] font-bold text-[#5c6f6c]">Volume = 15,684,113</span>
              </div>
            </div>
            <div className="relative flex w-[61px] flex-col justify-between pt-[61px] pb-[5px] pl-[3px] text-[11px] text-[#8f8f8f]">
              <svg className="absolute top-0.5 left-1.5 h-3 w-3" viewBox="0 0 12 12" fill="none" stroke="#d0d0d0"><path d="M0 .5h12M0 11.500h12M.5 7v2h2l6-6h2.500v2" /></svg>
              {PRICES.map((p) => <span key={p} className="flex h-0 items-center">{p}</span>)}
              <span className="absolute top-[322px] left-[3px] rounded border border-[#777] bg-black px-[3px] leading-3 text-[#f0f0f0]">5.14</span>
            </div>
          </section>
          <section className="mt-[3px] flex h-[223px] shrink-0">
            <div className="ml-0.5 flex min-w-0 flex-1 flex-col border-t border-r border-[#5a5a5a]">
              <div className="flex h-[19px] shrink-0 border-l border-[#5a5a5a] text-[11px] text-[#e6e6e6]">
                <Cell className="">TTM_Squeeze (CLOSE, 18, 1.5, 2.0, 1.0)</Cell>
                <Cell className="">3.05135</Cell>
                <Cell className="w-[15px]" />
              </div>
              <div className="relative flex-1">
                <SqueezeChart />
              </div>
            </div>
            <div className="relative flex w-[61px] flex-col justify-between pt-8 pb-[26px] pl-[3px] text-[11px] text-[#8f8f8f]">
              {LEVELS.map((l) => <span key={l} className="flex h-0 items-center">{l}</span>)}
              <span className="absolute top-[100px] left-[3px] rounded bg-white px-[3px] leading-[14px] text-[#444]">3.05135</span>
            </div>
          </section>
          <div className="mr-[61px] ml-0.5"><TimeAxis /></div>
          <ScrollRow />
        </main>
        <SideTabs />
      </div>
    </div>
  );
}
